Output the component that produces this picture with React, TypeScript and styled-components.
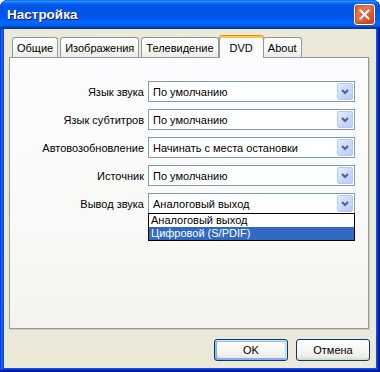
import React from 'react';
import styled, { createGlobalStyle } from 'styled-components';

const GlobalStyle = createGlobalStyle`
  html, body {
    margin: 0;
    padding: 0;
    background: #ffffff;
  }
  body {
    font-family: 'Liberation Sans', Arial, sans-serif;
    font-size: 11px;
    color: #000;
  }
`;

const Window = styled.div`
  width: 380px;
  height: 372px;
  box-sizing: border-box;
  display: flex;
  flex-direction: column;
  padding: 0 4px 4px 4px;
  border-radius: 8px 8px 0 0;
  overflow: hidden;
  background: #0055ea;
  box-shadow:
    inset -1px -1px #00138c,
    inset 1px 1px #0831d9,
    inset -2px -2px #001ea0,
    inset 2px 2px #166aee,
    inset -3px -3px #003bda,
    inset 3px 3px #0855dd;
`;

const TitleBar = styled.div`
  height: 29px;
  margin: 0 -4px;
  padding: 0 5px 0 7px;
  display: flex;
  align-items: center;
  justify-content: space-between;
  background: linear-gradient(
    180deg,
    #0058ee 0%,
    #3593ff 4%,
    #288eff 6%,
    #127dff 8%,
    #036ffc 10%,
    #0262ee 14%,
    #0057e5 20%,
    #0054e3 24%,
    #0055eb 56%,
    #005bf5 66%,
    #026afe 76%,
    #0062ef 86%,
    #0052d6 92%,
    #0040ab 94%,
    #003092 100%
  );
  border-radius: 8px 8px 0 0;
`;

const Title = styled.span`
  font-family: 'Liberation Sans', Arial, sans-serif;
  font-weight: bold;
  font-size: 13.5px;
  color: #ffffff;
  text-shadow: 1px 1px #0f1089;
`;

const CloseButton = styled.div`
  width: 21px;
  height: 21px;
  box-sizing: border-box;
  border: 1px solid #ffffff;
  border-radius: 3px;
  display: flex;
  align-items: center;
  justify-content: center;
  background: radial-gradient(circle at 85% 85%, #cc4622 0%, #dc6541 40%, #e37a57 70%, #cb4b2a 100%);
  box-shadow: inset 0 -1px 2px 1px #da4600;
`;

const Client = styled.div`
  flex: 1;
  display: flex;
  flex-direction: column;
  background: #ece9d8;
  padding: 6px 6px 7px 5px;
`;

const TabStrip = styled.div`
  display: flex;
  align-items: flex-end;
  padding-left: 3px;
  height: 22px;
  position: relative;
  z-index: 1;
`;

const Tab = styled.div<{ $active?: boolean }>`
  box-sizing: border-box;
  height: ${(p) => (p.$active ? '23px' : '20px')};
  padding: ${(p) => (p.$active ? '2px 10px 0' : '1px 4px 0')};
  margin: ${(p) => (p.$active ? '0 -1px -1px -2px' : '0 2px 0 0')};
  display: flex;
  align-items: center;
  border: 1px solid #919b9c;
  border-bottom: none;
  border-radius: 3px 3px 0 0;
  white-space: nowrap;
  background: ${(p) =>
    p.$active ? '#fcfcfe' : 'linear-gradient(180deg, #ffffff 0%, #f7f7f4 60%, #ecebe5 100%)'};
  ${(p) =>
    p.$active &&
    `
    border-top-color: #e68b2c;
    box-shadow: inset 0 2px #ffc73c;
    position: relative;
    z-index: 2;
  `}
`;

const Panel = styled.div`
  flex: 1;
  margin-right: 1px;
  border: 1px solid #919b9c;
  background: linear-gradient(180deg, #fcfcfe 0%, #f9f9f7 60%, #f4f3ee 100%);
  box-shadow: 1px 1px 0 #d0cec3;
  padding: 23px 13px 0 10px;
`;

const Form = styled.div`
  display: grid;
  grid-template-columns: 1fr 207px;
  column-gap: 4px;
  row-gap: 7px;
  align-items: center;
`;

const Label = styled.span`
  text-align: right;
  white-space: nowrap;
`;

const Combo = styled.div`
  position: relative;
  height: 21px;
  box-sizing: border-box;
  border: 1px solid #7f9db9;
  background: #ffffff;
  display: flex;
  align-items: center;
  padding: 1px;
`;

const ComboText = styled.span`
  flex: 1;
  padding-left: 3px;
  white-space: nowrap;
`;

const ComboButton = styled.div`
  width: 16px;
  height: 17px;
  box-sizing: border-box;
  border: 1px solid #b6c8f4;
  border-radius: 2px;
  display: flex;
  align-items: center;
  justify-content: center;
  background: linear-gradient(135deg, #e6edfd 0%, #cbd9fb 50%, #b9cbf7 100%);
`;

const DropList = styled.div`
  position: absolute;
  top: 100%;
  left: -1px;
  right: -1px;
  border: 1px solid #000000;
  background: #ffffff;
  z-index: 5;
`;

const DropItem = styled.div<{ $selected?: boolean }>`
  height: 13px;
  line-height: 13px;
  padding: 0 2px;
  white-space: nowrap;
  background: ${(p) => (p.$selected ? '#316ac5' : 'transparent')};
  color: ${(p) => (p.$selected ? '#ffffff' : '#000000')};
`;

const Footer = styled.div`
  display: flex;
  justify-content: flex-end;
  gap: 8px;
  padding-top: 10px;
`;

const Button = styled.div<{ $default?: boolean }>`
  width: 74px;
  height: 22px;
  box-sizing: border-box;
  border: 1px solid #003c74;
  border-radius: 3px;
  display: flex;
  align-items: center;
  justify-content: center;
  background: linear-gradient(180deg, #ffffff 0%, #f4f4f0 60%, #ecebe6 86%, #d6d0c5 100%);
  box-shadow: ${(p) =>
    p.$default
      ? 'inset -1px 1px #cee7ff, inset 1px 2px #98b8ea, inset -2px 2px #bcd4f6, inset 1px -1px #89ade4, inset 2px -2px #89ade4'
      : 'none'};
`;

const Chevron = () => (
  <svg width="8" height="6" viewBox="0 0 8 6">
    <path d="M1 1 L4 4 L7 1" fill="none" stroke="#4d6185" strokeWidth="2" />
  </svg>
);

const CloseIcon = () => (
  <svg width="11" height="11" viewBox="0 0 11 11">
    <path d="M1.5 1.5 L9.5 9.5 M9.5 1.5 L1.5 9.5" stroke="#ffffff" strokeWidth="2" strokeLinecap="square" />
  </svg>
);

const tabs = ['Общие', 'Изображения', 'Телевидение', 'DVD', 'About'];

const rows = [
  { label: 'Язык звука', value: 'По умолчанию' },
  { label: 'Язык субтитров', value: 'По умолчанию' },
  { label: 'Автовозобновление', value: 'Начинать с места остановки' },
  { label: 'Источник', value: 'По умолчанию' },
  { label: 'Вывод звука', value: 'Аналоговый выход', open: true },
];

export default function App() {
  return (
    <>
      <GlobalStyle />
      <Window>
        <TitleBar>
          <Title>Настройка</Title>
          <CloseButton>
            <CloseIcon />
          </CloseButton>
        </TitleBar>
        <Client>
          <TabStrip>
            {tabs.map((t) => (
              <Tab key={t} $active={t === 'DVD'}>
                {t}
              </Tab>
            ))}
          </TabStrip>
          <Panel>
            <Form>
              {rows.map((r) => (
                <React.Fragment key={r.label}>
                  <Label>{r.label}</Label>
                  <Combo>
                    <ComboText>{r.value}</ComboText>
                    <ComboButton>
                      <Chevron />
                    </ComboButton>
                    {r.open && (
                      <DropList>
                        <DropItem>Аналоговый выход</DropItem>
                        <DropItem $selected>Цифровой (S/PDIF)</DropItem>
                      </DropList>
                    )}
                  </Combo>
                </React.Fragment>
              ))}
            </Form>
          </Panel>
          <Footer>
            <Button $default>OK</Button>
            <Button>Отмена</Button>
          </Footer>
        </Client>
      </Window>
    </>
  );
}
